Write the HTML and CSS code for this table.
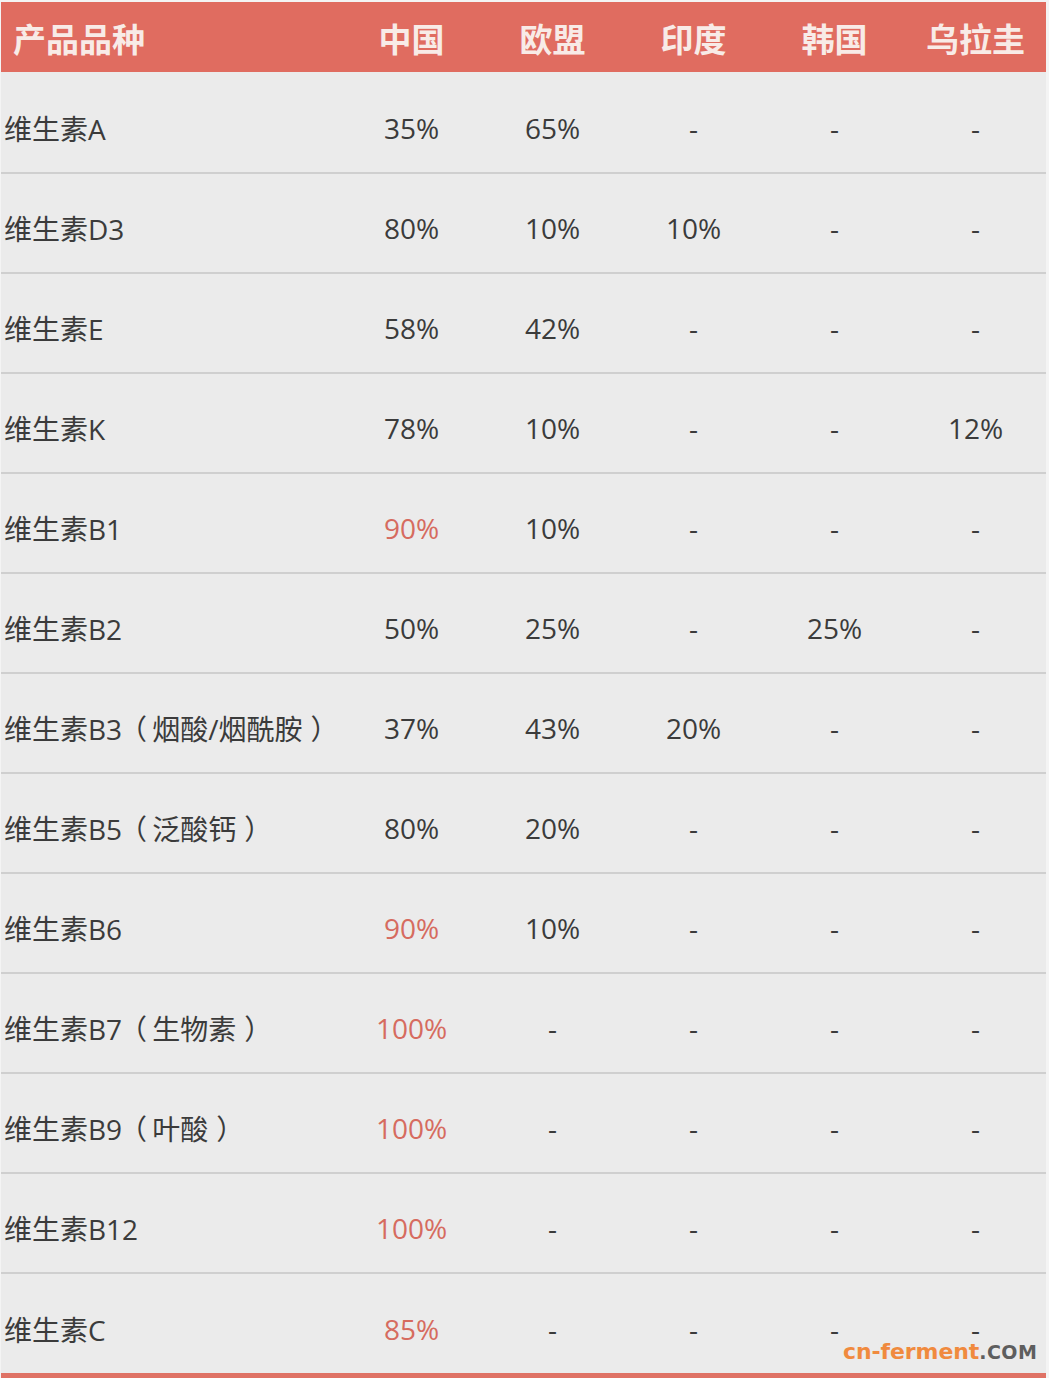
FILE: index.html
```html
<!DOCTYPE html>
<html lang="zh-CN">
<head>
<meta charset="utf-8">
<title>维生素产能分布</title>
<link rel="stylesheet" href="styles.css">
</head>
<body>
<div class="wrap">
  <div class="table">
    <div class="row head">
      <div class="cell name">产品品种</div>
      <div class="cell">中国</div>
      <div class="cell">欧盟</div>
      <div class="cell">印度</div>
      <div class="cell">韩国</div>
      <div class="cell">乌拉圭</div>
    </div>
    <div class="row first">
      <div class="cell name">维生素A</div>
      <div class="cell">35%</div><div class="cell">65%</div><div class="cell">-</div><div class="cell">-</div><div class="cell">-</div>
    </div>
    <div class="row">
      <div class="cell name">维生素D3</div>
      <div class="cell">80%</div><div class="cell">10%</div><div class="cell">10%</div><div class="cell">-</div><div class="cell">-</div>
    </div>
    <div class="row">
      <div class="cell name">维生素E</div>
      <div class="cell">58%</div><div class="cell">42%</div><div class="cell">-</div><div class="cell">-</div><div class="cell">-</div>
    </div>
    <div class="row">
      <div class="cell name">维生素K</div>
      <div class="cell">78%</div><div class="cell">10%</div><div class="cell">-</div><div class="cell">-</div><div class="cell">12%</div>
    </div>
    <div class="row">
      <div class="cell name">维生素B1</div>
      <div class="cell hi">90%</div><div class="cell">10%</div><div class="cell">-</div><div class="cell">-</div><div class="cell">-</div>
    </div>
    <div class="row">
      <div class="cell name">维生素B2</div>
      <div class="cell">50%</div><div class="cell">25%</div><div class="cell">-</div><div class="cell">25%</div><div class="cell">-</div>
    </div>
    <div class="row">
      <div class="cell name">维生素B3<span class="op">（</span>烟酸/烟酰胺<span class="cp">）</span></div>
      <div class="cell">37%</div><div class="cell">43%</div><div class="cell">20%</div><div class="cell">-</div><div class="cell">-</div>
    </div>
    <div class="row">
      <div class="cell name">维生素B5<span class="op">（</span>泛酸钙<span class="cp">）</span></div>
      <div class="cell">80%</div><div class="cell">20%</div><div class="cell">-</div><div class="cell">-</div><div class="cell">-</div>
    </div>
    <div class="row">
      <div class="cell name">维生素B6</div>
      <div class="cell hi">90%</div><div class="cell">10%</div><div class="cell">-</div><div class="cell">-</div><div class="cell">-</div>
    </div>
    <div class="row">
      <div class="cell name">维生素B7<span class="op">（</span>生物素<span class="cp">）</span></div>
      <div class="cell hi">100%</div><div class="cell">-</div><div class="cell">-</div><div class="cell">-</div><div class="cell">-</div>
    </div>
    <div class="row">
      <div class="cell name">维生素B9<span class="op">（</span>叶酸<span class="cp">）</span></div>
      <div class="cell hi">100%</div><div class="cell">-</div><div class="cell">-</div><div class="cell">-</div><div class="cell">-</div>
    </div>
    <div class="row">
      <div class="cell name">维生素B12</div>
      <div class="cell hi">100%</div><div class="cell">-</div><div class="cell">-</div><div class="cell">-</div><div class="cell">-</div>
    </div>
    <div class="row last">
      <div class="cell name">维生素C</div>
      <div class="cell hi">85%</div><div class="cell">-</div><div class="cell">-</div><div class="cell">-</div><div class="cell">-</div>
    </div>
  </div>
  <div class="watermark"><span class="wm-main">cn-ferment</span><span class="wm-com">.COM</span></div>
</div>
</body>
</html>
```

FILE: styles.css
```css
html, body {
  margin: 0;
  padding: 0;
  background: #f4f4f4;
}

.wrap {
  position: relative;
  width: 1049px;
  height: 1378px;
  padding-top: 2px;
  box-sizing: border-box;
}

.table {
  margin-left: 1px;
  width: 1045px;
  background: #ebebeb;
  font-family: "Open Sans", "Noto Sans CJK SC", sans-serif;
  color: #3b3b3b;
  border-bottom: 5px solid #df7265;
}

.row {
  display: grid;
  grid-template-columns: 340px repeat(5, 141px);
  height: 100px;
  box-sizing: border-box;
  padding-top: 10px;
  border-bottom: 2px solid #cfcfcf;
  align-items: center;
  font-size: 28px;
}

.row.first {
  height: 102px;
  padding-top: 11px;
}

.row.last {
  border-bottom: none;
  height: 99px;
}

.row.head {
  height: 70px;
  padding-top: 2px;
  border-bottom: none;
  background: #e06c60;
  color: #f8ebe7;
  font-family: "Noto Sans CJK SC", sans-serif;
  font-weight: 700;
  font-size: 33px;
}

.cell {
  text-align: center;
  white-space: nowrap;
}

.cell.name {
  text-align: left;
  padding-left: 3px;
}

.head .cell.name {
  padding-left: 12px;
}

.op,
.cp {
  font-feature-settings: "halt";
}

.op {
  margin-left: 11px;
  margin-right: 5px;
}

.cp {
  margin-left: 8px;
}

.cell.hi {
  color: #d66b5f;
}

.watermark {
  position: absolute;
  left: 843px;
  top: 1339px;
  font-family: "DejaVu Sans", sans-serif;
  font-weight: 700;
  font-size: 22px;
  letter-spacing: -0.1px;
}

.wm-main {
  color: #f08a3e;
}

.wm-com {
  color: #5e5e5e;
  font-size: 19px;
  letter-spacing: 0.5px;
}
```
